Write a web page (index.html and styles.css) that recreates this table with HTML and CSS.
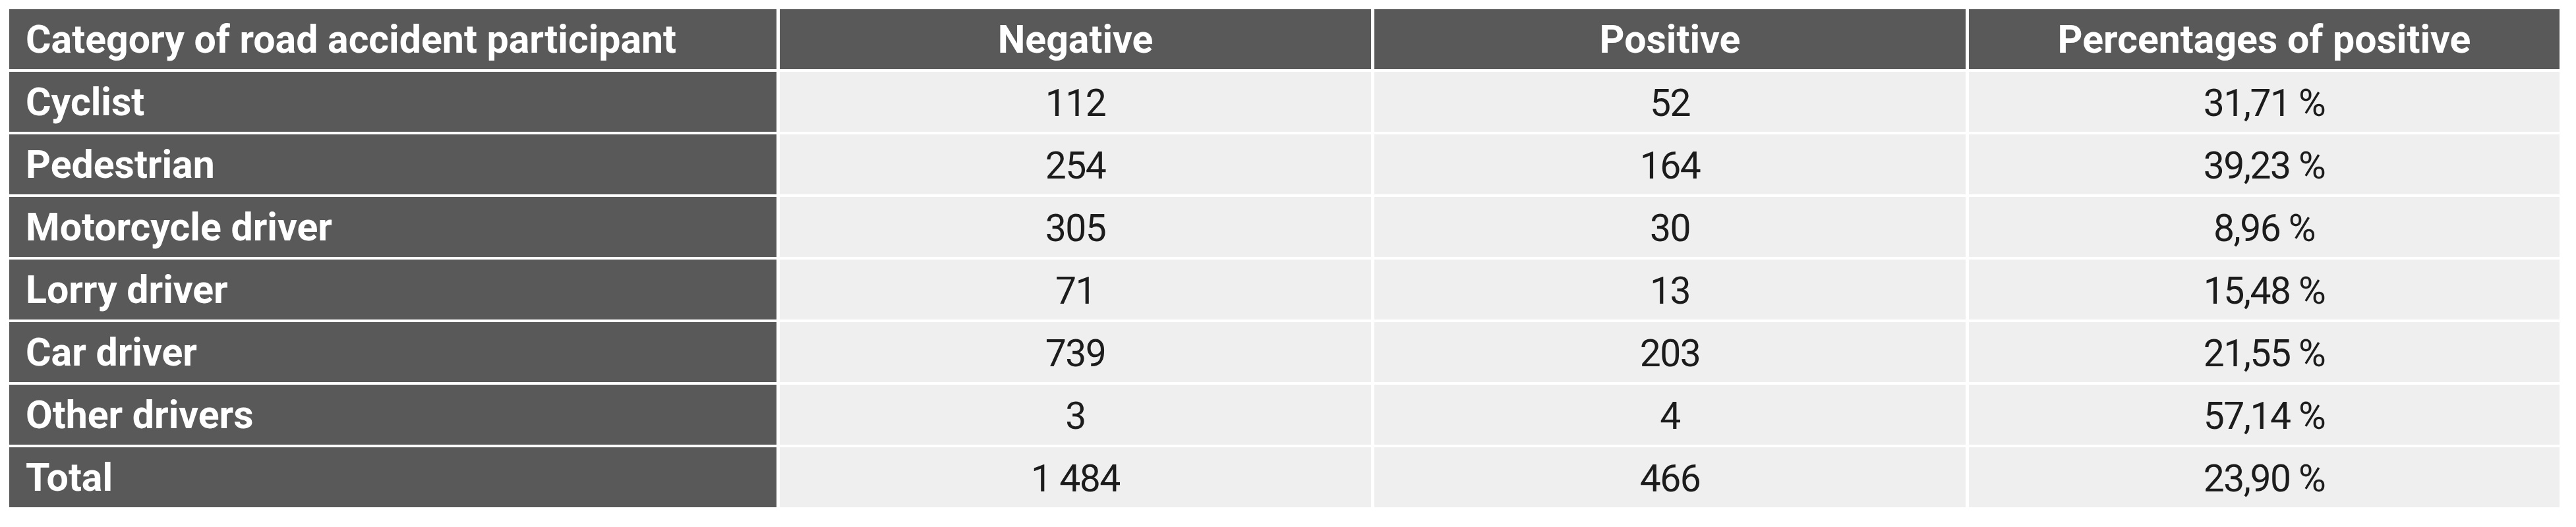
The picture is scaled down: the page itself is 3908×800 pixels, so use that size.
FILE: index.html
```html
<!DOCTYPE html>
<html lang="en">
<head>
<meta charset="utf-8">
<title>Road accident participants</title>
<link rel="stylesheet" href="styles.css">
</head>
<body>
<table class="data">
  <colgroup>
    <col class="c-label">
    <col class="c-num">
    <col class="c-num">
    <col class="c-pct">
  </colgroup>
  <thead>
    <tr>
      <th class="label">Category of road accident participant</th>
      <th class="head">Negative</th>
      <th class="head">Positive</th>
      <th class="head">Percentages of positive</th>
    </tr>
  </thead>
  <tbody>
    <tr><th class="label">Cyclist</th><td class="num">112</td><td class="num">52</td><td class="num">31,71 %</td></tr>
    <tr><th class="label">Pedestrian</th><td class="num">254</td><td class="num">164</td><td class="num">39,23 %</td></tr>
    <tr><th class="label">Motorcycle driver</th><td class="num">305</td><td class="num">30</td><td class="num">8,96 %</td></tr>
    <tr><th class="label">Lorry driver</th><td class="num">71</td><td class="num">13</td><td class="num">15,48 %</td></tr>
    <tr><th class="label">Car driver</th><td class="num">739</td><td class="num">203</td><td class="num">21,55 %</td></tr>
    <tr><th class="label">Other drivers</th><td class="num">3</td><td class="num">4</td><td class="num">57,14 %</td></tr>
    <tr><th class="label">Total</th><td class="num">1 484</td><td class="num">466</td><td class="num">23,90 %</td></tr>
  </tbody>
</table>
</body>
</html>
```
FILE: styles.css
```css
html, body {
  margin: 0;
  background: #ffffff;
}
body {
  padding: 10px 0 0 9px;
}
.data {
  border-collapse: separate;
  border-spacing: 5px 4px;
  table-layout: fixed;
  width: 3879px;
  font-family: Roboto, "Open Sans", "Liberation Sans", sans-serif;
  font-size: 59px;
  line-height: 1;
}
.c-label { width: 1164px; }
.c-num { width: 897px; }
.c-pct { width: 896px; }
.data th,
.data td {
  height: 91px;
  padding: 0;
  vertical-align: middle;
  box-sizing: border-box;
  white-space: nowrap;
}
.data th {
  background: #595959;
  color: #ffffff;
  font-weight: 700;
}
.data th.label {
  text-align: left;
  padding-left: 25px;
}
.data th.head {
  text-align: center;
}
.data td.num {
  background: #efefef;
  color: #1c1c1c;
  font-weight: 400;
  font-size: 57px;
  letter-spacing: -1.5px;
  text-align: center;
  padding-top: 4px;
}
```
